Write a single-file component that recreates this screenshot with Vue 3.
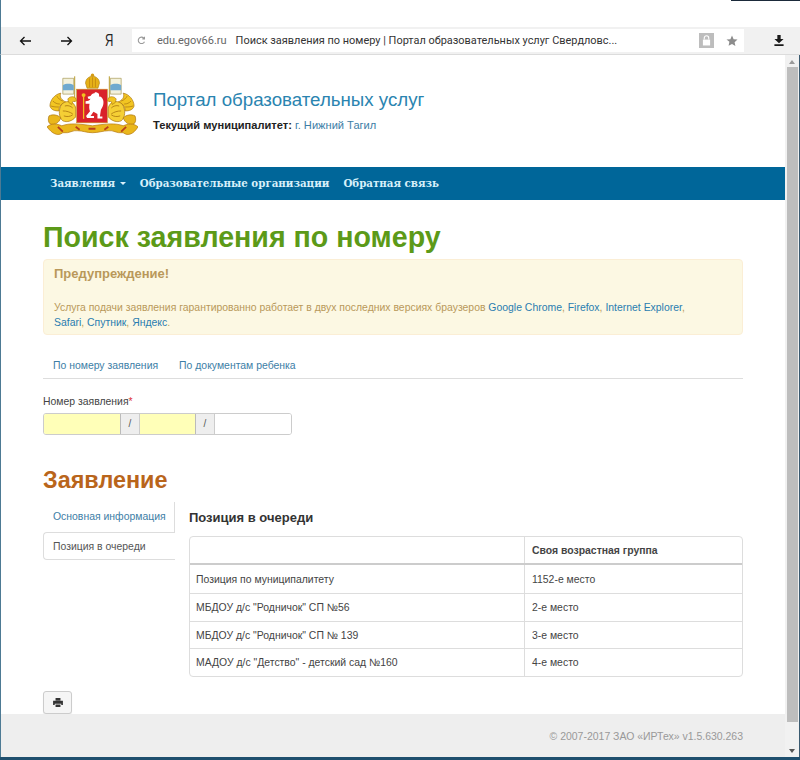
<script setup>
const rows = [
  ['Позиция по муниципалитету', '1152-е место'],
  ['МБДОУ д/с "Родничок" СП №56', '2-е место'],
  ['МБДОУ д/с "Родничок" СП № 139', '3-е место'],
  ['МАДОУ д/с "Детство" - детский сад №160', '4-е место'],
]
</script>

<template>
  <div class="window">
    <div class="topband"><span class="topline"></span></div>
    <div class="toolbar">
      <svg class="tb-ico back" width="12" height="10" viewBox="0 0 12 10"><path d="M12 5H1.500M5.500 1 1.500 5l4 4" fill="none" stroke="#111" stroke-width="1.300"/></svg>
      <svg class="tb-ico fwd" width="12" height="10" viewBox="0 0 12 10"><path d="M0 5h10.500M6.500 1l4 4-4 4" fill="none" stroke="#111" stroke-width="1.300"/></svg>
      <span class="ya">Я</span>
      <div class="addr">
        <svg class="reload" width="9" height="9" viewBox="0 0 10 10"><path d="M8.300 6.300A3.600 3.600 0 1 1 7.600 2.300M8.300.8v2.400H5.900" fill="none" stroke="#999" stroke-width="1.200"/></svg>
        <span class="host">edu.egov66.ru</span>
        <span class="title">Поиск заявления по номеру | Портал образовательных услуг Свердловс...</span>
        <span class="lock">
          <svg width="9" height="11" viewBox="0 0 10 12"><path d="M2.500 5V3.200a2.500 2.500 0 0 1 5 0V5" fill="none" stroke="#fff" stroke-width="1.200"/><rect x="1" y="5" width="8" height="6.500" fill="#fff"/></svg>
        </span>
        <svg class="star" width="12" height="12" viewBox="0 0 12 12"><path d="M6 .6l1.600 3.600 3.900.4-2.900 2.600.8 3.900L6 8.900l-3.400 1.800.8-3.900L.5 4.600l3.900-.4z" fill="#8c8c8c"/></svg>
      </div>
      <svg class="dl" width="10" height="11" viewBox="0 0 10 12"><path d="M3.200 0h3.600v4.400H10L5 9 0 4.400h3.200zM0 10.200h10V12H0z" fill="#1a1a1a"/></svg>
    </div>

    <div class="viewport">
      <div class="page">
        <header class="head">
          <svg class="crest" width="91" height="66" viewBox="0 0 92 66">
            <defs>
              <g id="griffin">
                <path d="M16 5h11v16H16z" fill="#f3f1dc" stroke="#a89a55" stroke-width=".7"/>
                <path d="M16 12c3-2 8-2 11 0v5H16z" fill="#6fa9cf"/>
                <path d="M28 3v26" stroke="#b89a2b" stroke-width="1"/>
                <path d="M3 33C3 27 8 21 14 20 12 24 15 27 19 29 15 30 12 33 12 38 8 38 4 37 3 33z" fill="#f2c522" stroke="#a9740e" stroke-width=".7"/>
                <path d="M6 28c2 2 4 3 7 3M4 33c3 1 5 1 8 1M10 23c1 2 3 4 6 5" fill="none" stroke="#a9740e" stroke-width=".7"/>
                <path d="M15 31C21 26 28 29 29 35v9c-3 4-9 6-13 4-4-3-5-11-1-17z" fill="#f5cf35" stroke="#a9740e" stroke-width=".7"/>
                <path d="M18 33c3-1 6 0 8 2M16 38c4 0 7 1 10 3M17 43c3 1 6 1 9-1" fill="none" stroke="#a9740e" stroke-width=".8"/>
                <path d="M2 43c4-2 9-1 12 2-2 5-6 8-11 6-2-2-2-5-1-8z" fill="#eab71c" stroke="#a9740e" stroke-width=".7"/>
                <path d="M21 26c2-3 6-3 8-1l1 3-4 .5-1 3-3-2z" fill="#f2c522" stroke="#a9740e" stroke-width=".6"/>
              </g>
            </defs>
            <use href="#griffin"/>
            <use href="#griffin" transform="matrix(-1 0 0 1 91 0)"/>
            <path d="M39 10c0-4 3-7 7-7s7 3 7 7l-1.500 5h-11z" fill="#e6b117" stroke="#a87a10" stroke-width=".6"/>
            <path d="M43 5v9M46 4v10M49 5v9" stroke="#b5780f" stroke-width=".6"/>
            <circle cx="46" cy="1.800" r="1.700" fill="#d49a12"/>
            <path d="M0 54c5-4 10-3 15-1 8-3 17-2 31 0 14-2 23-3 31 0 5-2 10-3 15 1-4 7-10 10-15 6-7 1-10-3-15-2-5 0-10 2-16 2s-10-2-15-2c-5-1-8 3-15 2-5 4-11 1-16-6z" fill="#eab71c" stroke="#b5770f" stroke-width=".7"/>
            <path d="M11 54l5 5M29 54l4 3M58 57l4-3M75 59l5-5M42 56h7" stroke="#b8401a" stroke-width="1.800"/>
            <rect x="30" y="16" width="31" height="34" fill="#d9232a" stroke="#c79a1e" stroke-width=".6"/>
            <path d="M48 20c-2 0-3 1-4 3l-3 .7 1 2.300 2-.3c-1 2-3 2.500-5 2.500v2.500h4c-.5 3-.5 5 .5 7.500l-4 5 1 2h7v-2h-3.500l3-4.500 4 2.500v4.500h5v-2h-2.500l1-7c3-4 3.500-9 1-12-1-1-2-1.500-3-1 1-3-1-4.500-4-4.500z" fill="#fff"/>
            <path d="M37 21v25" stroke="#f0c21f" stroke-width="1.300"/>
            <circle cx="37" cy="22" r="2" fill="#f0c21f"/>
          </svg>
          <div class="head-text">
            <h1>Портал образовательных услуг</h1>
            <p><b>Текущий муниципалитет:</b> <a>г. Нижний Тагил</a></p>
          </div>
        </header>

        <nav class="nav">
          <span class="nav-item">Заявления <i class="caret"></i></span>
          <span class="nav-item">Образовательные организации</span>
          <span class="nav-item">Обратная связь</span>
        </nav>

        <main class="content">
          <h2 class="page-title">Поиск заявления по номеру</h2>
          <div class="alert">
            <h4>Предупреждение!</h4>
            <p>Услуга подачи заявления гарантированно работает в двух последних версиях браузеров <a>Google Chrome</a>, <a>Firefox</a>, <a>Internet Explorer</a>, <a>Safari</a>, <a>Спутник</a>, <a>Яндекс</a>.</p>
          </div>

          <div class="tabs">
            <a>По номеру заявления</a>
            <a>По документам ребенка</a>
          </div>

          <label class="lbl">Номер заявления<span class="req">*</span></label>
          <div class="group">
            <span class="seg yellow one"></span>
            <span class="sep">/</span>
            <span class="seg yellow two"></span>
            <span class="sep">/</span>
            <span class="seg three"></span>
          </div>

          <h2 class="sec-title">Заявление</h2>
          <div class="split">
            <aside class="side">
              <a class="side-link">Основная информация</a>
              <span class="side-active">Позиция в очереди</span>
            </aside>
            <section class="panel">
              <h3>Позиция в очереди</h3>
              <div class="tbl">
                <div class="tr th">
                  <div class="c1"></div>
                  <div class="c2">Своя возрастная группа</div>
                </div>
                <div class="tr" v-for="r in rows" :key="r[0]">
                  <div class="c1">{{ r[0] }}</div>
                  <div class="c2">{{ r[1] }}</div>
                </div>
              </div>
            </section>
          </div>

          <button class="print" type="button" aria-label="Печать">
            <svg width="10" height="9" viewBox="0 0 12 11"><path d="M3 0h6v3H3zM0 3.500h12V8.500H10V7H2v1.500H0zM3 8h6v3H3z" fill="#333"/></svg>
          </button>
        </main>

        <footer class="foot">© 2007-2017 ЗАО «ИРТех» v1.5.630.263</footer>
      </div>
      <div class="scroll">
        <span class="arrow up"></span>
        <div class="thumb"></div>
        <span class="arrow down"></span>
      </div>
      <div class="desk-edge"></div>
    </div>
    <div class="taskbar"></div>
  </div>
</template>

<style>
html, body { margin: 0; background: #fff; }
</style>

<style scoped>
.window { width: 800px; height: 760px; display: flex; flex-direction: column; overflow: hidden; font-family: "Liberation Sans", Arial, sans-serif; color: #333; background: #fff; }
.topband { height: 27px; flex: none; display: flex; justify-content: flex-end; background: #fff; border-left: 1px solid #4d7a94; box-sizing: border-box; }
.topline { width: 69px; height: 1px; background: #1b2a3a; }
.toolbar { height: 28px; flex: none; display: flex; align-items: center; background: #f1f1f1; border-left: 1px solid #4d7a94; border-bottom: 1px solid #dcdcdc; box-sizing: border-box; }
.tb-ico { flex: none; }
.back { margin-left: 18px; }
.fwd { margin-left: 30px; }
.ya { margin-left: 32px; width: 10px; font-size: 16px; line-height: 16px; color: #222; transform: scaleX(.72); transform-origin: left center; }
.addr { margin-left: 17px; width: 612px; height: 23px; background: #fff; display: flex; align-items: center; flex: none; }
.reload { margin-left: 5px; flex: none; }
.host { margin-left: 11px; color: #666; font-family: Roboto, sans-serif; font-size: 11px; white-space: nowrap; }
.title { margin-left: 9px; color: #333; font-family: Roboto, sans-serif; font-size: 10.950px; white-space: nowrap; }
.lock { margin-left: auto; width: 15px; height: 15px; background: #bdbdbd; display: flex; align-items: center; justify-content: center; }
.star { margin: 0 6px 0 12px; }
.dl { margin-left: 30px; flex: none; }

.viewport { flex: 1; min-height: 0; display: flex; }
.page { width: 785px; flex: none; box-sizing: border-box; border-left: 1px solid #4d7a94; display: flex; flex-direction: column; background: #fff; }
.head { height: 112px; flex: none; display: flex; align-items: flex-start; padding: 18px 0 0 46px; box-sizing: border-box; }
.crest { flex: none; }
.head-text { margin-left: 15px; padding-top: 16px; }
.head-text h1 { margin: 0; font-weight: 400; font-size: 18.700px; line-height: 22px; color: #2a84b0; }
.head-text p { margin: 7px 0 0; font-size: 11.100px; line-height: 14px; color: #222; }
.head-text a { color: #3d7ea6; }

.nav { height: 33px; flex: none; box-sizing: border-box; padding: 0 0 2px 49px; background: #006699; display: flex; align-items: center; gap: 14px; font-family: "DejaVu Serif", serif; }
.nav-item { color: #d8f0fa; font-size: 10.250px; font-weight: 700; white-space: nowrap; }
.caret { display: inline-block; width: 0; height: 0; border: 3px solid transparent; border-top-color: #d8f0fa; border-bottom: 0; vertical-align: middle; margin-left: 1px; }

.content { flex: 1; min-height: 0; padding: 0 42px; display: flex; flex-direction: column; align-items: stretch; }
.page-title { margin: 19px 0 0; font-size: 28.600px; line-height: 36px; font-weight: 700; color: #5c9a18; }
.alert { margin-top: 4px; height: 76px; box-sizing: border-box; background: #fcf8e3; border: 1px solid #fbeed5; border-radius: 4px; padding: 5px 50px 5px 10px; color: #b9985a; flex: none; }
.alert h4 { margin: 0; font-size: 13px; line-height: 18px; font-weight: 700; }
.alert p { margin: 17px 0 0; font-size: 10.430px; line-height: 15px; }
.alert a { color: #2a7db0; }

.tabs { margin-top: 19px; height: 24px; flex: none; display: flex; gap: 21px; padding-left: 10px; border-bottom: 1px solid #ddd; font-size: 10.430px; line-height: 24px; color: #3d7ea6; }
.lbl { margin-top: 16px; font-size: 10.430px; line-height: 14px; color: #444; }
.req { color: #d33; }
.group { margin-top: 4px; width: 249px; height: 22px; flex: none; display: flex; border: 1px solid #ccc; border-radius: 3px; box-sizing: border-box; overflow: hidden; }
.seg { display: block; }
.yellow { background: #ffffb8; }
.one { width: 76px; }
.two { width: 55px; }
.three { flex: 1; background: #fff; }
.sep { width: 20px; background: #eee; border-left: 1px solid #bbb; border-right: 1px solid #ccc; box-sizing: border-box; text-align: center; font-size: 10px; line-height: 20px; color: #555; }

.sec-title { margin: 30px 0 0; font-size: 23.400px; line-height: 30px; font-weight: 700; color: #b9651b; }
.split { margin-top: 7px; display: flex; flex: none; }
.side { width: 132px; flex: none; display: flex; flex-direction: column; font-size: 10.430px; }
.side-link { height: 30px; line-height: 30px; padding-left: 10px; color: #3d7ea6; border-right: 1px solid #ddd; box-sizing: border-box; }
.side-active { height: 28px; line-height: 28px; padding-left: 9px; border: 1px solid #ddd; border-right: 0; border-radius: 4px 0 0 4px; box-sizing: border-box; color: #555; background: #fff; }
.panel { margin-left: 14px; flex: 1; min-width: 0; }
.panel h3 { margin: 0; font-size: 13px; line-height: 32px; height: 30px; font-weight: 700; color: #333; }
.tbl { margin-top: 4px; border: 1px solid #ddd; border-radius: 4px; font-size: 10.430px; color: #444; }
.tr { display: flex; height: 28px; box-sizing: border-box; border-top: 1px solid #ddd; line-height: 28px; }
.tr:nth-child(4) { height: 27px; }
.tr:nth-child(5) { height: 28px; }
.th { border-top: 0; height: 28px; border-bottom: 2px solid #ccc; line-height: 28px; font-weight: 700; }
.th + .tr { border-top: 0; line-height: 30px; }
.c1 { width: 335px; flex: none; padding-left: 6px; box-sizing: border-box; border-right: 1px solid #ddd; }
.c2 { padding-left: 7px; }

.print { margin-top: 14px; width: 29px; height: 23px; flex: none; background: #f5f5f5; border: 1px solid #ccc; border-radius: 3px; padding: 0; display: flex; align-items: center; justify-content: center; box-shadow: 0 1px 1px rgba(0,0,0,.08); }

.foot { height: 43px; flex: none; background: #eee; text-align: right; padding-right: 42px; font-size: 10.470px; line-height: 46px; color: #999; }

.scroll { width: 14px; flex: none; background: #f1f1f1; display: flex; flex-direction: column; align-items: center; }
.arrow { width: 0; height: 0; border: 3px solid transparent; flex: none; }
.up { border-bottom: 4px solid #9a9a9a; border-top: 0; margin: 5px 0 3px; }
.down { border-top: 4px solid #555; border-bottom: 0; margin: 27px 0 4px; }
.thumb { width: 11px; flex: 1; background: #bdbdbd; margin-left: 1px; }
.desk-edge { width: 1px; flex: none; background: #3a5a70; }
.taskbar { height: 3px; flex: none; background: #1f4f6e; }
</style>
